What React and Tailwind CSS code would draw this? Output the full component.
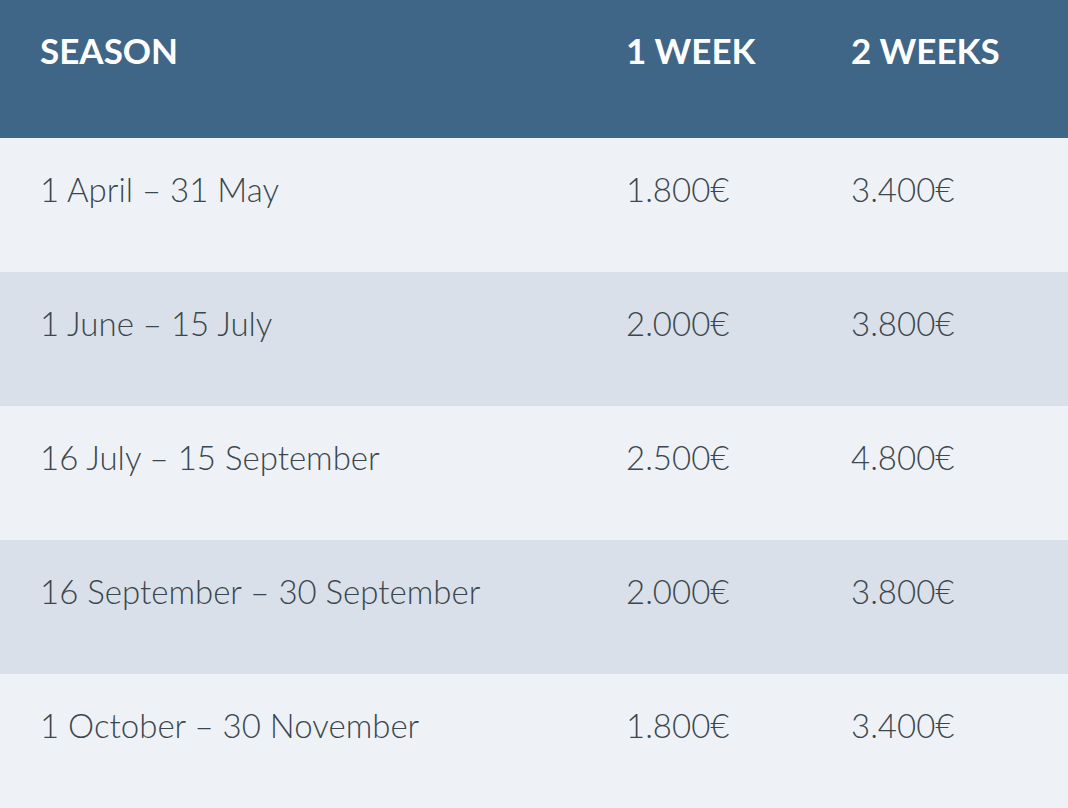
import React from "react";

const rows = [
  { season: "1 April – 31 May", one: "1.800€", two: "3.400€" },
  { season: "1 June – 15 July", one: "2.000€", two: "3.800€" },
  { season: "16 July – 15 September", one: "2.500€", two: "4.800€" },
  { season: "16 September – 30 September", one: "2.000€", two: "3.800€" },
  { season: "1 October – 30 November", one: "1.800€", two: "3.400€" },
];

const App = () => {
  return (
    <div className="w-[1068px] h-[808px] overflow-hidden font-['Lato',sans-serif]">
      {/* Header */}
      <div className="grid grid-cols-[586px_225px_1fr] h-[138px] bg-[#3f6686] text-white text-[35px] font-bold leading-[40px] pt-[30px]">
        <div className="pl-10">SEASON</div>
        <div className="pl-10">1 WEEK</div>
        <div className="pl-10">2 WEEKS</div>
      </div>

      {/* Rows */}
      {rows.map((r, i) => (
        <div
          key={i}
          className={`grid grid-cols-[586px_225px_1fr] h-[134px] pt-[31px] text-[33px] font-light leading-[40px] text-[#3b474c] ${
            i % 2 === 0 ? "bg-[#eef2f7]" : "bg-[#d9e0ea]"
          }`}
        >
          <div className="pl-10">{r.season}</div>
          <div className="pl-10">{r.one}</div>
          <div className="pl-10">{r.two}</div>
        </div>
      ))}
    </div>
  );
};

export default App;
